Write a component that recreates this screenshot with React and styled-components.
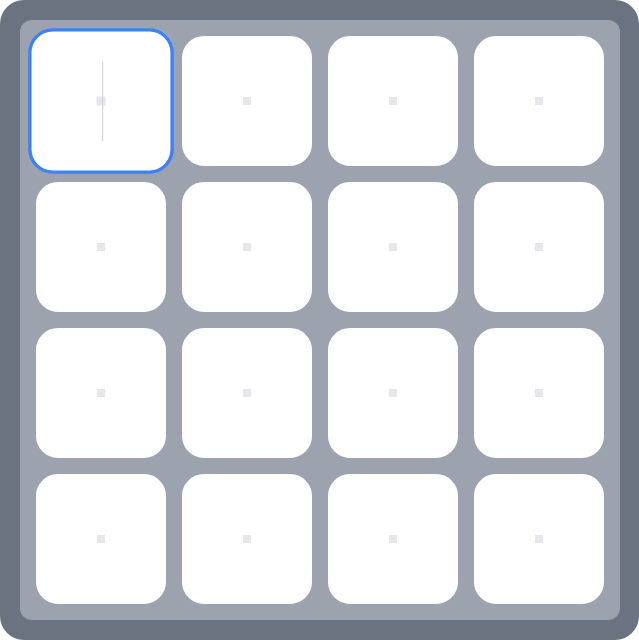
import React from 'react';
import styled, { createGlobalStyle } from 'styled-components';

const GlobalStyle = createGlobalStyle`
  html, body {
    margin: 0;
    padding: 0;
    background: #ffffff;
    font-family: "Inter", "Liberation Sans", sans-serif;
  }
`;

const Frame = styled.div`
  width: 639px;
  height: 640px;
  box-sizing: border-box;
  padding: 20px 19px 20px 20px;
  background: #6b7280;
  border-radius: 24px;
`;

const Board = styled.div`
  width: 600px;
  height: 600px;
  box-sizing: border-box;
  padding: 16px;
  background: #9ca3af;
  border-radius: 12px;
  display: grid;
  grid-template-columns: repeat(4, 130px);
  grid-template-rows: repeat(4, 130px);
  gap: 16px;
`;

const Cell = styled.div`
  box-sizing: border-box;
  background: #ffffff;
  border-radius: 22px;
  border: 3px solid ${({ $active }) => ($active ? '#3b82f6' : '#ffffff')};
  transform: ${({ $active }) => ($active ? 'scale(1.12)' : 'none')};
  display: grid;
  place-items: center;
`;

const Dot = styled.span`
  grid-area: 1 / 1;
  width: 8px;
  height: 8px;
  background: #e5e7eb;
`;

const Caret = styled.span`
  grid-area: 1 / 1;
  width: 1px;
  height: 71px;
  background: #d1d5db;
  transform: translateX(1px);
`;

const cells = Array.from({ length: 16 }, (_, i) => i);

export default function App() {
  return (
    <>
      <GlobalStyle />
      <Frame>
        <Board>
          {cells.map((i) => (
            <Cell key={i} $active={i === 0}>
              <Dot />
              {i === 0 && <Caret />}
            </Cell>
          ))}
        </Board>
      </Frame>
    </>
  );
}
